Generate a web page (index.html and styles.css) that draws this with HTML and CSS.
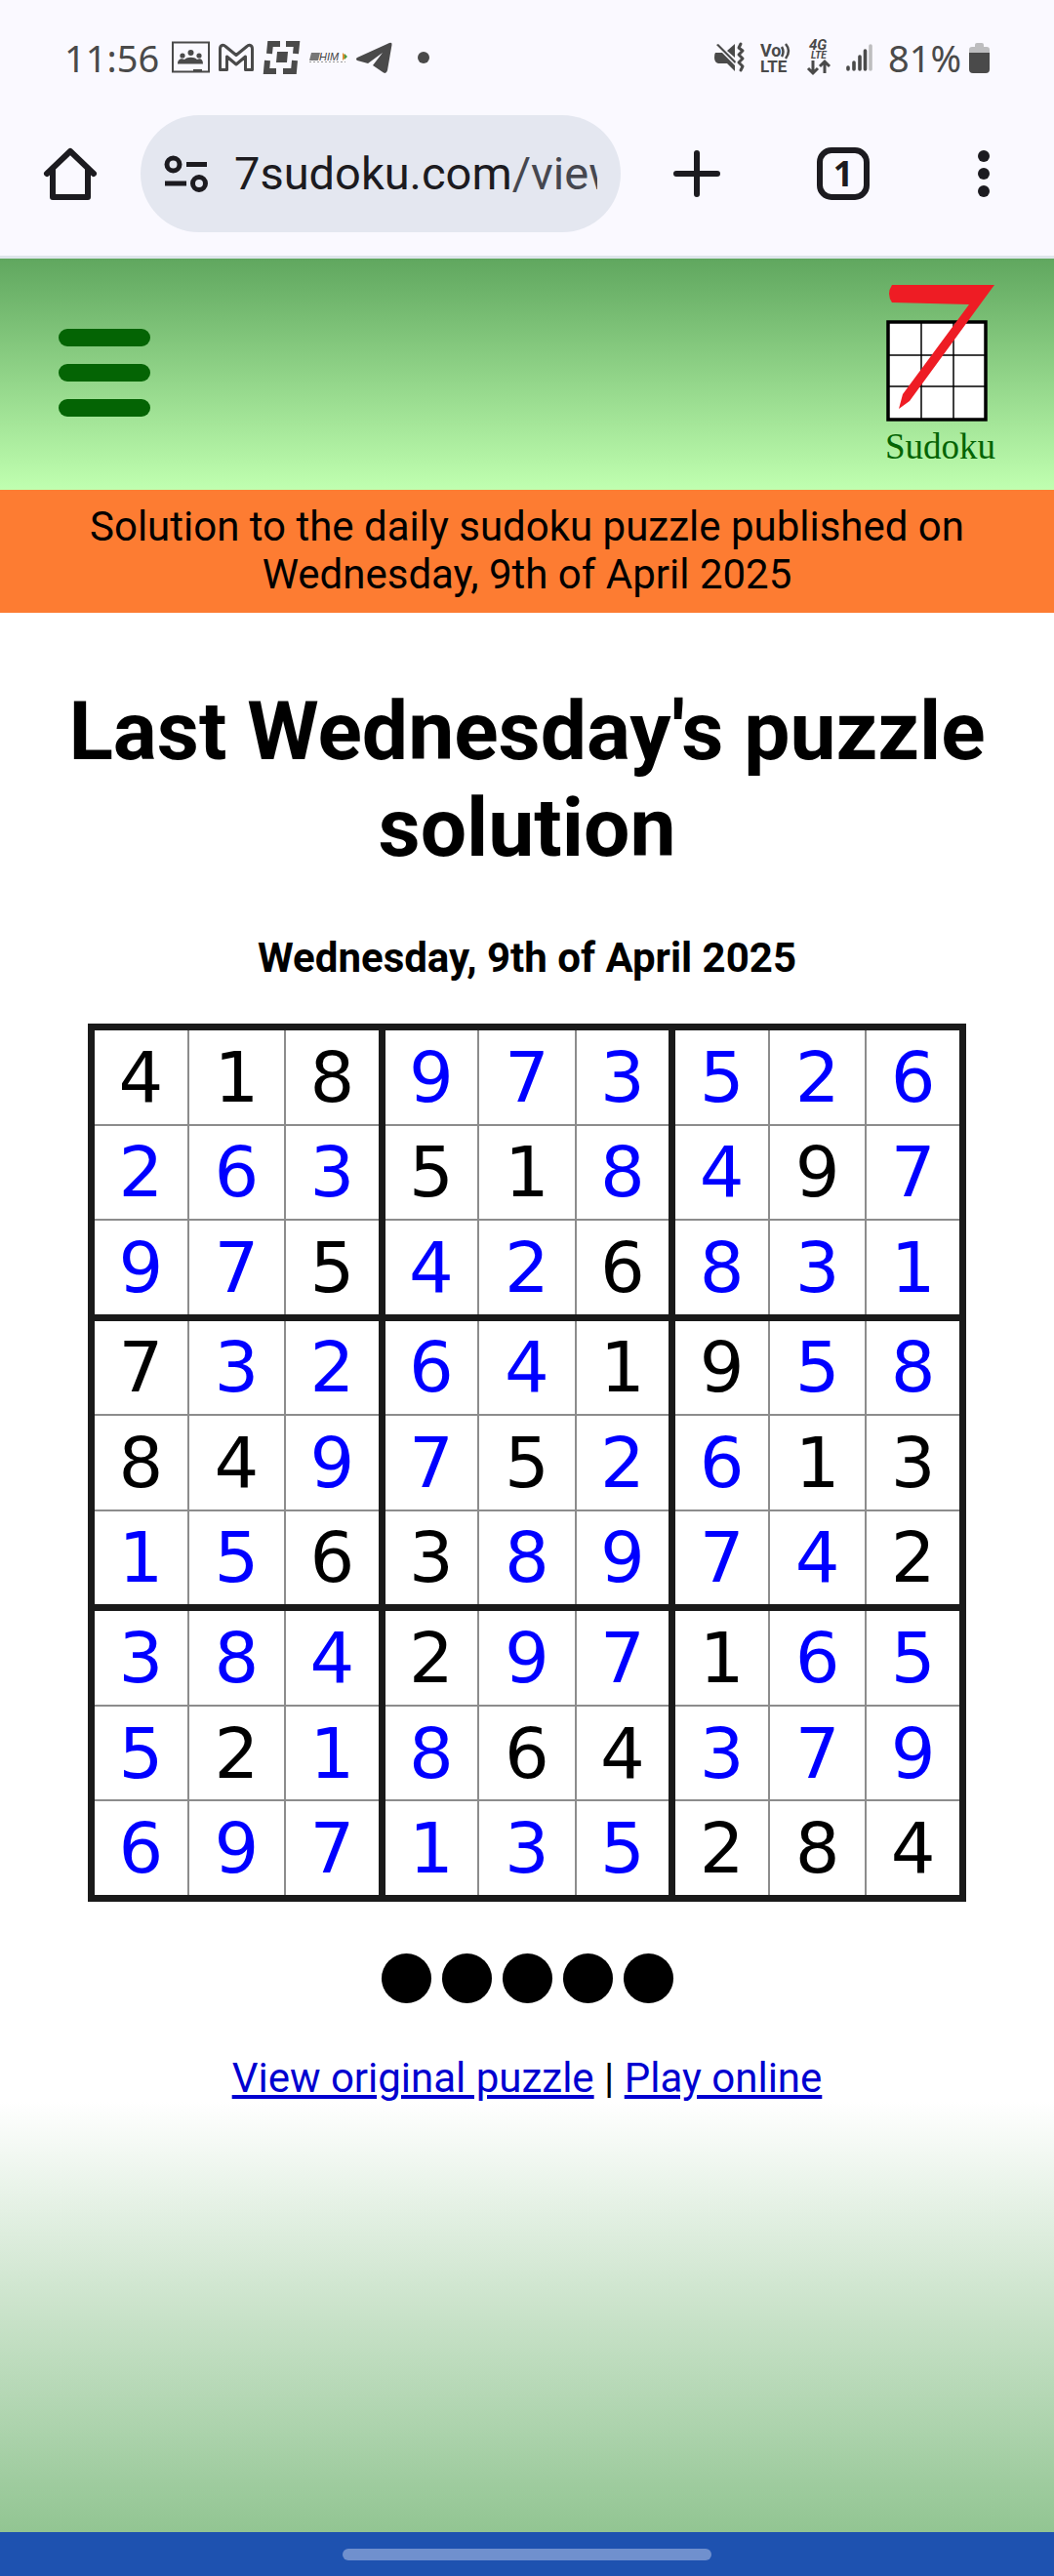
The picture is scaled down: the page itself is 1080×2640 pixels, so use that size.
FILE: index.html
```html
<!DOCTYPE html>
<html lang="en">
<head>
<meta charset="utf-8">
<meta name="viewport" content="width=device-width, initial-scale=1">
<title>Last Wednesday's puzzle solution</title>
<link rel="stylesheet" href="styles.css">
</head>
<body>
<div class="status">
  <div class="status-left">
    <span class="clock">11:56</span>
    <svg width="39" height="34" viewBox="0 0 39 34" fill="#4a4a4a" aria-hidden="true"><path d="M1 1.500h37v30H1z" fill="none" stroke="#4a4a4a" stroke-width="2"/><circle cx="19.500" cy="12" r="3"/><circle cx="11" cy="15" r="2.600"/><circle cx="28" cy="15" r="2.600"/><path d="M6 23.500c0-5 4-6 7-4.500 3-3 10-3 13 0 3-1.500 6-.5 6 4.500zM22 29h9v3h-9z"/></svg>
    <svg width="36" height="28" viewBox="0 0 36 28" fill="none" stroke="#4a4a4a" stroke-width="3" stroke-linejoin="round" aria-hidden="true"><path d="M1.500 5C1.500 1 5 .5 7 2.500l11 9 11-9C31 .5 34.500 1 34.500 5v21.500h-7V13L18 21 8.500 13v13.500h-7z"/></svg>
    <svg width="39" height="36" viewBox="0 0 39 36" fill="none" stroke="#4a4a4a" stroke-width="6" aria-hidden="true"><path d="M7 14l1-10h10M24 4h11l-1 10M5 21L4 32h10M21 32h11l1-11"/><path d="M15 12h11l-1 11H14z" fill="#4a4a4a" stroke="none"/></svg>
    <svg width="39" height="12" viewBox="0 0 39 12" aria-hidden="true"><path d="M2 1h9L9 9H0z" fill="#777"/><path d="M0 10.500h37" stroke="#999" stroke-dasharray="2 2"/><text x="10" y="9" font-family="Liberation Sans" font-size="11" font-style="italic" fill="#444">HIM</text><path d="M34 1l4 4-4 4z" fill="#d98a2b"/><path d="M36 2l3 3-3 3z" fill="#4b9b45"/></svg>
    <svg width="38" height="33" viewBox="0 0 38 33" fill="#4a4a4a" aria-hidden="true"><path d="M1 16L34 1q3-1 2.500 2L32 29q-1 4-4 2.500L17 24l10-13-15 11-11-3q-2-1.500 0-3z"/></svg>
    <svg width="12" height="12" viewBox="0 0 12 12" class="more-dot" aria-hidden="true"><circle cx="6" cy="6" r="6" fill="#4a4a4a"/></svg>
  </div>
  <div class="status-right">
    <svg width="31" height="30" viewBox="0 0 31 30" fill="#4a4a4a" aria-hidden="true"><path d="M1 10h7l13 13v6l-8-8H4q-4-1-4-6 0-4 1-5zM13 8l8-7v14zM2 2l2-1 18 18-1 2z"/><path d="M27 1l-2 4 4 3-4 4 4 4-4 4 4 4-2 4" fill="none" stroke="#4a4a4a" stroke-width="3" stroke-linejoin="round" stroke-linecap="round"/></svg>
    <svg width="32" height="31" viewBox="0 0 32 31" fill="#4a4a4a" font-family="Roboto" font-weight="bold" aria-hidden="true"><text x="0" y="14" font-size="18">Vo</text><text x="0" y="30" font-size="17">LTE</text><path d="M22 4q3 5 0 10M26 1q6 7 0 15" fill="none" stroke="#4a4a4a" stroke-width="2.500"/></svg>
    <svg width="24" height="36" viewBox="0 0 24 36" fill="#4a4a4a" font-family="Roboto" font-weight="bold" font-style="italic" aria-hidden="true"><text x="2" y="10" font-size="15">4G</text><text x="4" y="19" font-size="10">LTE</text><path d="M6 21v13M1 29l5 5 5-5M18 34V22m-5 5l5-5 5 5" fill="none" stroke="#4a4a4a" stroke-width="3"/></svg>
    <svg width="27" height="30" viewBox="0 0 27 30" stroke="#4a4a4a" stroke-width="3.600" stroke-linecap="round" aria-hidden="true"><path d="M2 25v2M8 20v7M14 14v13M19.500 8v19"/><path d="M25 3v24" stroke="#bdbdbf"/></svg>
    <span class="charge">81%</span>
    <svg width="21" height="31" viewBox="0 0 21 31" aria-hidden="true"><path d="M0 11V7q0-3 3-3h3V2q0-2 2-2h5q2 0 2 2v2h3q3 0 3 3v4z" fill="#bdbdbf"/><path d="M0 10h21v17q0 4-4 4H4q-4 0-4-4z" fill="#4a4a4a"/></svg>
  </div>
</div>
<div class="toolbar">
  <button class="tool" aria-label="Home"><svg width="54" height="54" viewBox="0 0 54 54" fill="none" stroke="#1c1b20" stroke-width="6" stroke-linejoin="round" stroke-linecap="round"><path d="M3 27L27 4l24 23M9 23v28h36V23"/></svg></button>
  <button class="address" aria-label="Address bar">
    <svg class="tune" width="46" height="39" viewBox="0 0 46 39" fill="none" stroke="#1c1b20" stroke-width="5"><circle cx="9.500" cy="9.500" r="6.500"/><circle cx="36" cy="29" r="6.500"/><path d="M23 9.500h21M1 29h22"/></svg>
    <span class="url">7sudoku.com<span class="path">/view</span></span>
  </button>
  <button class="tool wide" aria-label="New tab"><svg width="48" height="48" viewBox="0 0 48 48" stroke="#1c1b20" stroke-width="6" stroke-linecap="round"><path d="M24 3v42M3 24h42"/></svg></button>
  <button class="tool" aria-label="Switch tabs"><span class="tabs">1</span></button>
  <button class="tool" aria-label="Menu"><svg width="12" height="48" viewBox="0 0 12 48" fill="#1c1b20"><circle cx="6" cy="6" r="6"/><circle cx="6" cy="24" r="6"/><circle cx="6" cy="42" r="6"/></svg></button>
</div>
<header class="site">
  <button class="burger" aria-label="Menu"><span></span><span></span><span></span></button>
  <a class="logo" href="#" aria-label="7 Sudoku">
    <svg width="113" height="185" viewBox="0 0 113 185"><path d="M3 38h100v100H3z" fill="#fff" stroke="#000" stroke-width="3.500"/><path d="M37 38v100M70 38v100M3 72h100M3 104h100" stroke="#000" stroke-width="1.500"/><path d="M7 0h105L25 119 14 127l4-15L86 20 7 18Q1 9 7 0z" fill="#ee1c24"/><text x="0" y="178" font-family="Liberation Serif, serif" font-size="37" fill="#046404">Sudoku</text></svg>
  </a>
</header>
<p class="notice">Solution to the daily sudoku puzzle published on Wednesday, 9th of April 2025</p>
<main>
  <h1>Last Wednesday's puzzle solution</h1>
  <h2>Wednesday, 9th of April 2025</h2>
  <table class="sudoku">
    <tbody>
    <tr><td>4</td><td>1</td><td>8</td><td class="s">9</td><td class="s">7</td><td class="s">3</td><td class="s">5</td><td class="s">2</td><td class="s">6</td></tr>
    <tr><td class="s">2</td><td class="s">6</td><td class="s">3</td><td>5</td><td>1</td><td class="s">8</td><td class="s">4</td><td>9</td><td class="s">7</td></tr>
    <tr><td class="s">9</td><td class="s">7</td><td>5</td><td class="s">4</td><td class="s">2</td><td>6</td><td class="s">8</td><td class="s">3</td><td class="s">1</td></tr>
    <tr><td>7</td><td class="s">3</td><td class="s">2</td><td class="s">6</td><td class="s">4</td><td>1</td><td>9</td><td class="s">5</td><td class="s">8</td></tr>
    <tr><td>8</td><td>4</td><td class="s">9</td><td class="s">7</td><td>5</td><td class="s">2</td><td class="s">6</td><td>1</td><td>3</td></tr>
    <tr><td class="s">1</td><td class="s">5</td><td>6</td><td>3</td><td class="s">8</td><td class="s">9</td><td class="s">7</td><td class="s">4</td><td>2</td></tr>
    <tr><td class="s">3</td><td class="s">8</td><td class="s">4</td><td>2</td><td class="s">9</td><td class="s">7</td><td>1</td><td class="s">6</td><td class="s">5</td></tr>
    <tr><td class="s">5</td><td>2</td><td class="s">1</td><td class="s">8</td><td>6</td><td>4</td><td class="s">3</td><td class="s">7</td><td class="s">9</td></tr>
    <tr><td class="s">6</td><td class="s">9</td><td class="s">7</td><td class="s">1</td><td class="s">3</td><td class="s">5</td><td>2</td><td>8</td><td>4</td></tr>
    </tbody>
  </table>
  <div class="rating" role="img" aria-label="Difficulty 5 of 5"><i></i><i></i><i></i><i></i><i></i></div>
  <p class="links"><a href="#">View original puzzle</a> | <a href="#">Play online</a></p>
  <div class="fade"></div>
</main>
<div class="gesture"><span></span></div>
</body>
</html>
```
FILE: styles.css
```css
* { box-sizing: border-box; }

body {
  margin: 0;
  min-height: 100vh;
  display: flex;
  flex-direction: column;
  background: #fff;
  color: #000;
  font-family: Roboto, sans-serif;
  font-size: 42px;
  line-height: 49px;
}

button {
  border: 0;
  padding: 0;
  background: none;
  font: inherit;
  color: inherit;
}

svg { display: block; flex: none; overflow: visible; }

/* Phone status bar */
.status {
  height: 118px;
  padding: 0 66px;
  display: flex;
  align-items: center;
  justify-content: space-between;
  background: #faf9ff;
  color: #4a4a4a;
  font-family: "Noto Sans", sans-serif;
  font-size: 38px;
}
.status-left { display: flex; align-items: center; gap: 9px; }
.status-right { display: flex; align-items: center; gap: 16px; }
.clock { margin-right: 4px; }
.charge { margin-right: -8px; }
.more-dot { margin-left: 16px; }

/* Browser toolbar */
.toolbar {
  display: flex;
  align-items: center;
  padding-bottom: 24px;
  border-bottom: 3px solid #dde5ea;
  background: #faf9ff;
  color: #1c1b20;
}
.tool {
  flex: none;
  width: 144px;
  height: 120px;
  display: flex;
  align-items: center;
  justify-content: center;
}
.tool.wide { width: 156px; }
.address {
  flex: 1;
  min-width: 0;
  height: 120px;
  padding: 0 24px;
  display: flex;
  align-items: center;
  gap: 26px;
  border-radius: 60px;
  background: #e4e7f0;
  font-size: 47px;
  line-height: 60px;
  text-align: left;
}
.url {
  flex: 1;
  min-width: 0;
  overflow: hidden;
  white-space: nowrap;
}
.path { color: #46474f; }
.tabs {
  width: 54px;
  height: 54px;
  border: 6px solid #1c1b20;
  border-radius: 15px;
  font: bold 36px/42px "Noto Sans", sans-serif;
  text-align: center;
}

/* Site header */
.site {
  display: flex;
  justify-content: space-between;
  align-items: flex-start;
  padding: 27px 60px 25px;
  background: linear-gradient(#60a75f, #c0ffb0);
}
.burger {
  width: 94px;
  margin-top: 45px;
  display: grid;
  gap: 18px;
}
.burger span {
  height: 18px;
  border-radius: 9px;
  background: #046404;
}
.notice {
  margin: 0;
  padding: 13px 60px 15px;
  background: #fd7c32;
  text-align: center;
}

/* Puzzle */
main {
  flex: 1;
  display: flex;
  flex-direction: column;
  text-align: center;
}
h1 {
  margin: 72px 60px 59px;
  font-size: 84px;
  line-height: 99px;
}
h2 {
  margin: 0 0 43px;
  font-size: 42px;
}
.sudoku {
  width: calc(100% - 180px);
  height: 900px;
  margin: 0 90px;
  table-layout: fixed;
  border-collapse: collapse;
  border: 7px solid #1a1a1a;
  font-family: "DejaVu Sans", sans-serif;
  font-size: 72px;
  line-height: 84px;
}
.sudoku td {
  padding: 0;
  border: 2px solid #8c8c8c;
}
.sudoku td:nth-child(3n):not(:last-child) { border-right: 7px solid #1a1a1a; }
.sudoku tr:nth-child(3n):not(:last-child) td { border-bottom: 7px solid #1a1a1a; }
.sudoku .s { color: #00f; }

.rating {
  margin: 53px 0 52px;
  display: flex;
  justify-content: center;
  gap: 11px;
}
.rating i {
  width: 51px;
  height: 51px;
  border-radius: 50%;
  background: #000;
}
.links { margin: 0; }
.links a { color: #0000d0; }
.fade {
  flex: 1;
  min-height: 240px;
  background: linear-gradient(#fff, #92c592);
}

/* Gesture bar */
.gesture {
  height: 45px;
  display: flex;
  justify-content: center;
  align-items: center;
  background: #1e52b0;
}
.gesture span {
  width: 35%;
  height: 12px;
  border-radius: 6px;
  background: #7090ce;
}
```
